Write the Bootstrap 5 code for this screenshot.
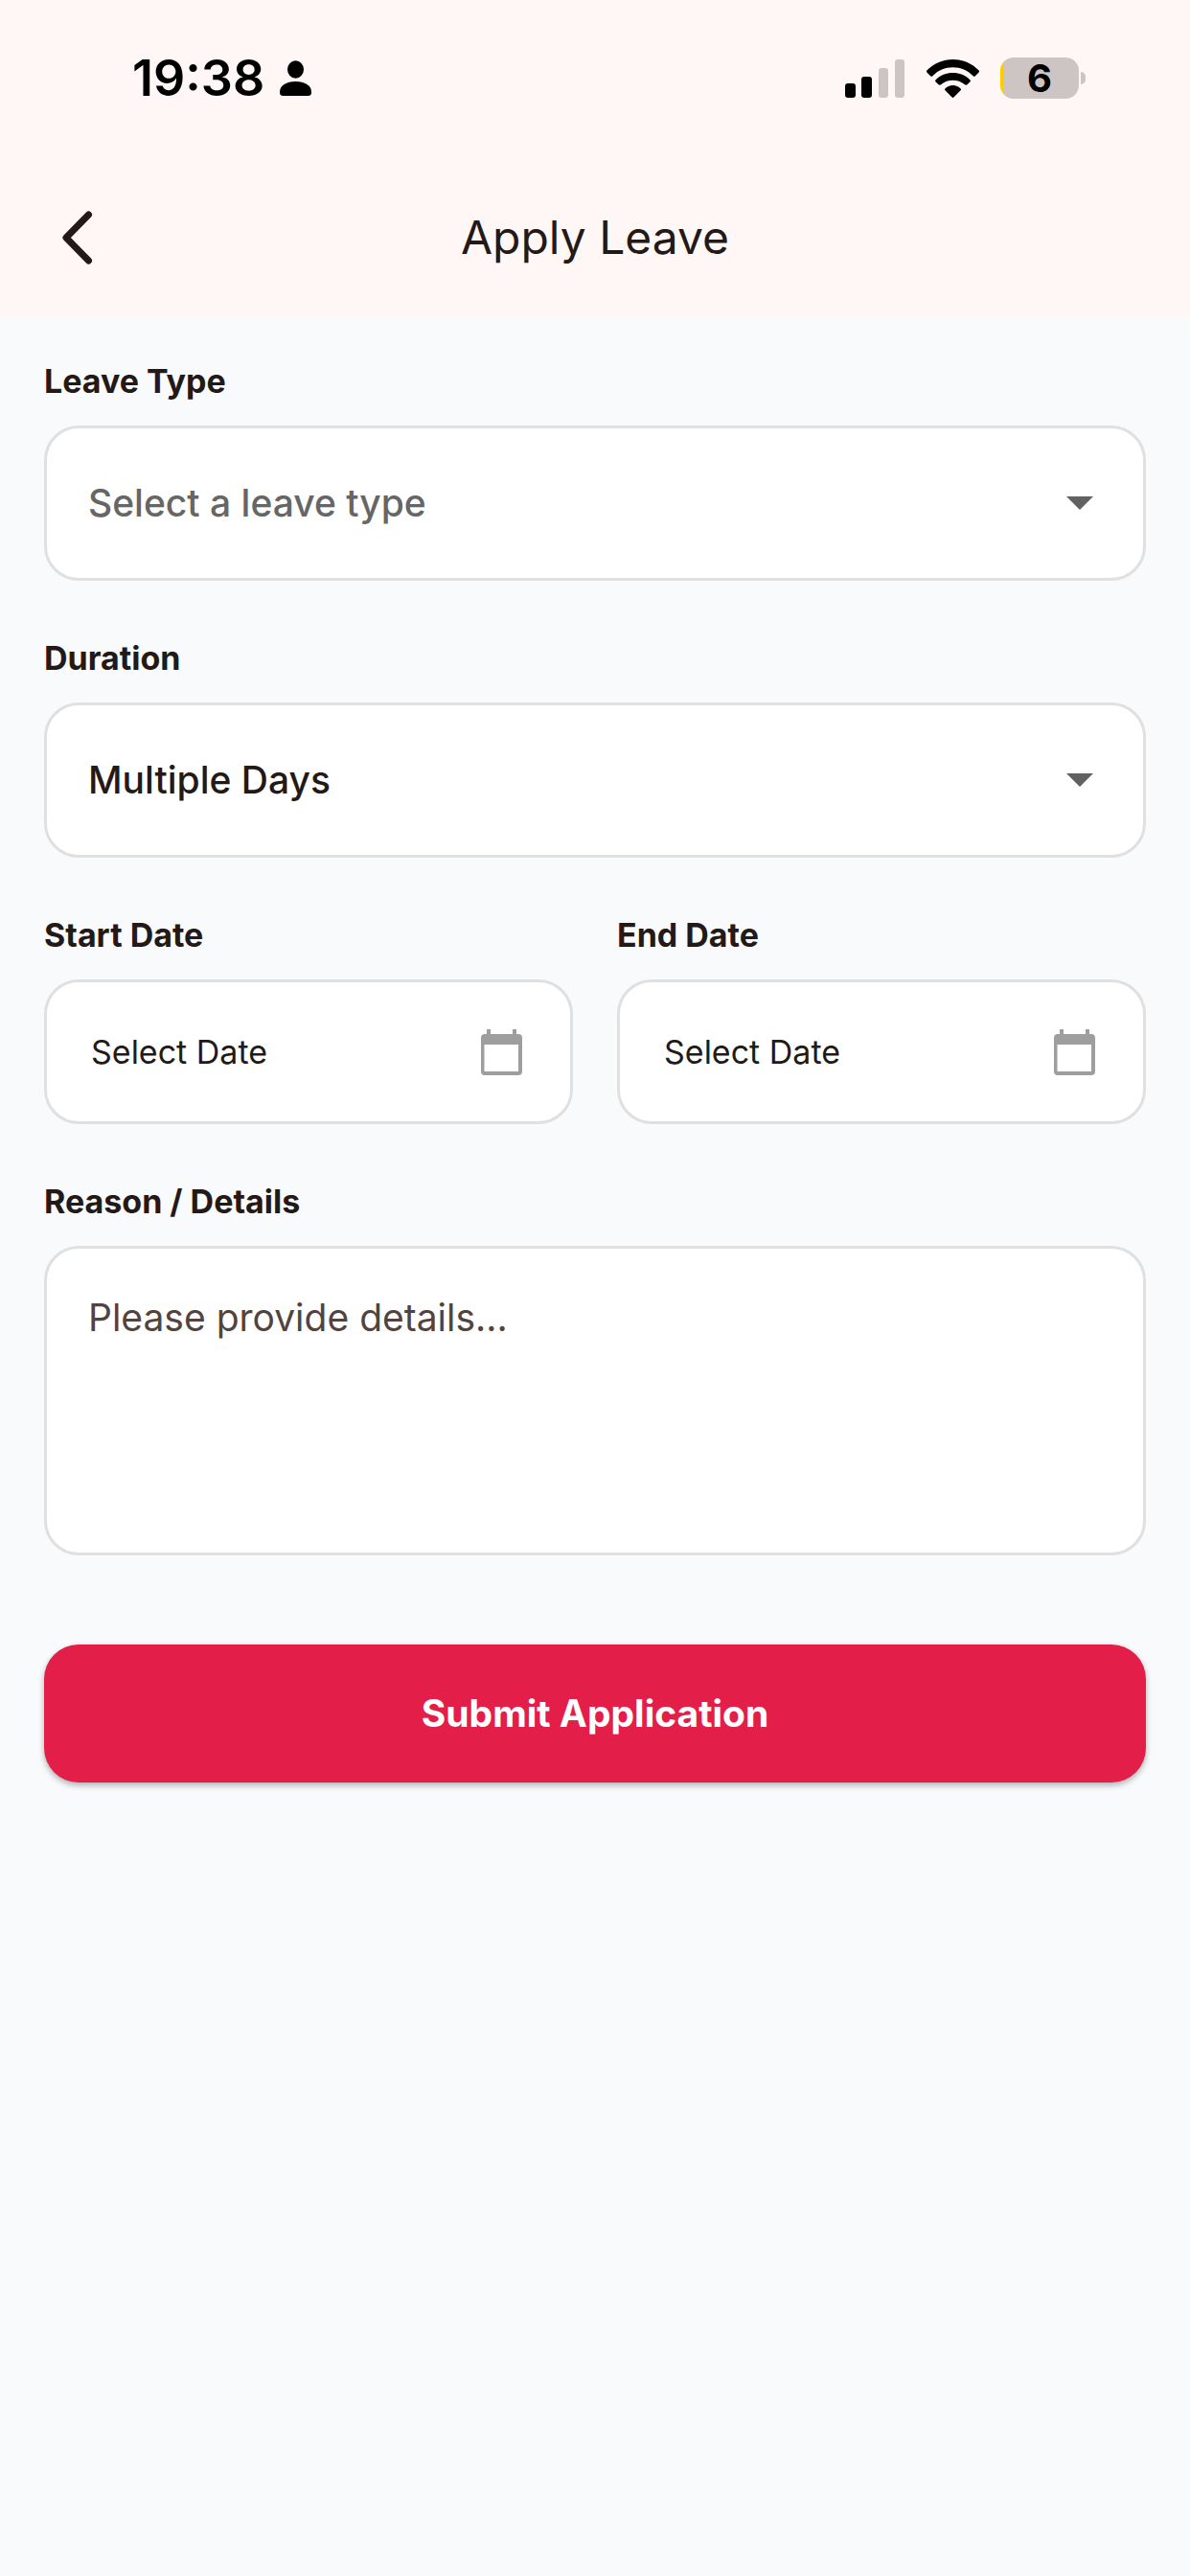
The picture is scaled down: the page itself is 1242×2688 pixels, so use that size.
<!DOCTYPE html>
<html lang="en">
<head>
<meta charset="utf-8">
<meta name="viewport" content="width=device-width, initial-scale=1">
<title>Apply Leave</title>
<link href="https://cdn.jsdelivr.net/npm/bootstrap@5.3.0/dist/css/bootstrap.min.css" rel="stylesheet">
<style>
  :root { --ink: #231917; --line: #e0e0e0; --edge: 46px; }
  body { background: #f9fafc; color: var(--ink); font-family: Inter, "Liberation Sans", sans-serif; }
  svg { display: block; flex: none; }

  .app-header { background: #fff7f6; }
  .status-bar { height: 167px; padding: 0 109px 4px 138px; color: #000; }
  .clock { font-size: 52px; line-height: 60px; font-weight: 600; }
  .status-icons { gap: 22px; }
  .battery { width: 82px; height: 43px; border-radius: 14px; background: linear-gradient(to right, #ffcc00 4px, #ccc5c4 4px); font-size: 40px; line-height: 43px; font-weight: 700; }
  .battery-tip { width: 5px; height: 13px; margin-left: 2px; border-radius: 0 6px 6px 0; background: #ccc5c4; }
  .title-bar { height: 162px; padding: 0 var(--edge); }
  .title-bar h1 { font-size: 48px; line-height: 60px; font-weight: 400; }
  .back-btn { padding: 14px 18px; border: 0; color: var(--ink); }

  .leave-form { padding: 49px var(--edge); }
  .field-block { margin-bottom: 61px; }
  .date-row { --bs-gutter-x: 46px; }
  .form-label { margin-bottom: 26px; font-size: 34px; line-height: 40px; font-weight: 700; }
  .field-box { border: 3px solid var(--line); border-radius: 36px; background-color: #fff; color: var(--ink); font-size: 39px; line-height: 56px; }
  select.field-box {
    height: 162px; padding: 0 120px 0 43px; font-weight: 500;
    background-image: url("data:image/svg+xml,%3Csvg xmlns='http://www.w3.org/2000/svg' viewBox='0 0 28 14'%3E%3Cpath d='M0 0h28L14 14z' fill='%23616161'/%3E%3C/svg%3E");
    background-size: 28px 14px; background-position: right 52px center;
  }
  select.unset { color: #666; }
  .date-btn { height: 151px; padding: 0 50px 0 46px; font-size: 34px; }
  textarea.field-box { height: 323px; padding: 44px 43px; resize: none; }
  textarea.field-box::placeholder { color: #534340; opacity: 1; }
  .submit-btn { height: 144px; margin-top: 93px; border: 0; border-radius: 36px; background: #e31e48; color: #fff; font-size: 39px; font-weight: 700; box-shadow: 0 3px 6px rgba(0, 0, 0, .3); }
  .submit-btn:hover { background: #c9183e; color: #fff; }
</style>
</head>
<body>
<header class="app-header">
  <div class="status-bar d-flex align-items-center justify-content-between">
    <div class="d-flex align-items-center gap-3">
      <span class="clock">19:38</span>
      <svg width="33" height="37" viewBox="0 0 33 37" aria-hidden="true"><ellipse cx="16.500" cy="9.500" rx="8.500" ry="9.300"/><path d="M0 33C0 26 7 22 16.500 22S33 26 33 33c0 3-1 4-4 4H4c-3 0-4-1-4-4z"/></svg>
    </div>
    <div class="status-icons d-flex align-items-center">
      <svg width="63" height="40" viewBox="0 0 63 40" aria-hidden="true"><rect y="25" width="11" height="15" rx="3"/><rect x="17" y="18" width="11" height="22" rx="3"/><g fill="#ccc5c4"><rect x="35" y="9" width="10" height="31" rx="3"/><rect x="52" width="10" height="40" rx="3"/></g></svg>
      <svg width="55" height="40" viewBox="0 0 55 40" aria-hidden="true"><path d="M.6 11.300C7.800 4 17.300 0 27.500 0s19.700 4 26.900 11.300c.8.800.8 1.600 0 2.400l-3.500 3.500c-.8.800-1.500.8-2.300 0C42.900 11.500 35.500 8.300 27.500 8.300S12.100 11.500 6.400 17.200c-.8.800-1.500.8-2.300 0L.6 13.700c-.8-.8-.8-1.600 0-2.400z"/><path d="M9.700 21.200C14.500 16.500 20.700 14 27.500 14s13 2.500 17.800 7.200c.8.800.8 1.500 0 2.300l-2.500 2.500c-1 1-2.200 1-3.200 0-3.300-2.700-7.500-4.200-12.100-4.200s-8.800 1.500-12.100 4.200c-1 1-2.200 1-3.200 0l-2.500-2.500c-.8-.8-.8-1.500 0-2.300z"/><path d="M19.400 30.500c2.200-2.200 5-3.400 8.100-3.400s5.900 1.200 8.100 3.400c.6.600.6 1.200 0 1.800l-7.200 7.200c-.6.600-1.200.6-1.800 0l-7.200-7.200c-.6-.6-.6-1.200 0-1.800z"/></svg>
      <div class="d-flex align-items-center">
        <div class="battery text-center">6</div>
        <div class="battery-tip"></div>
      </div>
    </div>
  </div>
  <div class="title-bar row gx-0 align-items-center">
    <div class="col">
      <button type="button" class="btn back-btn" aria-label="Back">
        <svg width="34" height="56" viewBox="0 0 34 56" fill="none" stroke="currentColor" stroke-width="7" stroke-linecap="round" stroke-linejoin="round" aria-hidden="true"><path d="M28.500 4L5 28l23.500 24"/></svg>
      </button>
    </div>
    <h1 class="col-auto mb-0">Apply Leave</h1>
    <div class="col"></div>
  </div>
</header>

<main>
  <form class="leave-form">
    <div class="field-block">
      <label class="form-label d-block" for="leaveType">Leave Type</label>
      <select class="form-select field-box unset" id="leaveType">
        <option selected>Select a leave type</option>
      </select>
    </div>
    <div class="field-block">
      <label class="form-label d-block" for="duration">Duration</label>
      <select class="form-select field-box" id="duration">
        <option selected>Multiple Days</option>
      </select>
    </div>
    <div class="row date-row field-block">
      <div class="col-6">
        <label class="form-label d-block" for="startDate">Start Date</label>
        <button type="button" class="btn field-box date-btn w-100 d-flex align-items-center justify-content-between" id="startDate">
          Select Date
          <svg width="43" height="48" viewBox="0 0 43 48" fill="#9e9e9e" aria-hidden="true"><path fill-rule="evenodd" d="M6 0h4v5h23V0h4v5h2q4 0 4 4v35q0 4-4 4H4q-4 0-4-4V9q0-4 4-4h2zM3.500 16v28h35.500V16z"/></svg>
        </button>
      </div>
      <div class="col-6">
        <label class="form-label d-block" for="endDate">End Date</label>
        <button type="button" class="btn field-box date-btn w-100 d-flex align-items-center justify-content-between" id="endDate">
          Select Date
          <svg width="43" height="48" viewBox="0 0 43 48" fill="#9e9e9e" aria-hidden="true"><path fill-rule="evenodd" d="M6 0h4v5h23V0h4v5h2q4 0 4 4v35q0 4-4 4H4q-4 0-4-4V9q0-4 4-4h2zM3.500 16v28h35.500V16z"/></svg>
        </button>
      </div>
    </div>
    <div>
      <label class="form-label d-block" for="reason">Reason / Details</label>
      <textarea class="form-control field-box" id="reason" placeholder="Please provide details..."></textarea>
    </div>
    <button type="submit" class="btn submit-btn w-100">Submit Application</button>
  </form>
</main>
<script src="https://cdn.jsdelivr.net/npm/bootstrap@5.3.0/dist/js/bootstrap.bundle.min.js"></script>
</body>
</html>
